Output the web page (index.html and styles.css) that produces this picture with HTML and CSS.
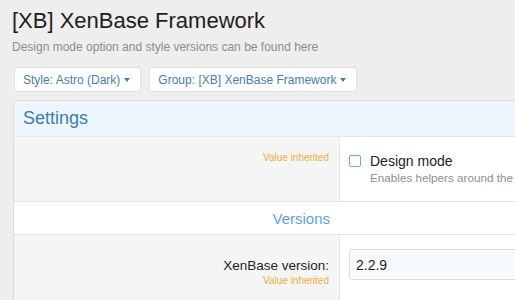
FILE: index.html
```html
<!DOCTYPE html>
<html>
<head>
    <meta charset="utf-8">
    <link rel="stylesheet" href="styles.css">
</head>
<body>
    <div class="page">
        <div class="page-header">
            <h1 class="page-title">[XB] XenBase Framework</h1>
            <div class="page-desc">Design mode option and style versions can be found here</div>
        </div>

        <div class="filter-bar">
            <button class="menu-btn">Style: Astro (Dark) <span class="caret"></span></button>
            <button class="menu-btn">Group: [XB] XenBase Framework <span class="caret"></span></button>
        </div>

        <div class="block">
            <div class="block-header">Settings</div>

            <div class="form-row row-design">
                <div class="row-label">
                    <div class="hint">Value inherited</div>
                </div>
                <div class="row-input">
                    <label class="check">
                        <span class="check-box"></span>
                        <span class="check-text">
                            <span class="check-title">Design mode</span>
                            <span class="check-desc">Enables helpers around the</span>
                        </span>
                    </label>
                </div>
            </div>

            <div class="section-row">
                <div class="section-title">Versions</div>
            </div>

            <div class="form-row row-version">
                <div class="row-label">
                    <div class="label-text">XenBase version:</div>
                    <div class="hint">Value inherited</div>
                </div>
                <div class="row-input">
                    <input class="text-input" type="text" value="2.2.9">
                </div>
            </div>
        </div>
    </div>
</body>
</html>
```

FILE: styles.css
```css
* {
    margin: 0;
    padding: 0;
    box-sizing: border-box;
}

body {
    background: #eeeeee;
    font-family: "Liberation Sans", Arial, sans-serif;
    color: #141414;
    overflow: hidden;
}

.page {
    width: 640px;
    padding-left: 13px;
}

.page-header {
    padding-top: 7px;
}

.page-title {
    font-size: 22px;
    font-weight: 400;
    line-height: 28px;
    margin-left: -1px;
    color: #1d1d1d;
}

.page-desc {
    margin-top: 5px;
    font-size: 12px;
    line-height: 14px;
    margin-left: -1px;
    color: #8c8c8c;
}

.filter-bar {
    display: flex;
    gap: 8px;
    margin-top: 13px;
    padding-left: 1px;
}

.menu-btn {
    height: 25px;
    padding: 0 10px 0 8px;
    background: #fff;
    border: 1px solid #e2e2e2;
    border-radius: 3px;
    font-family: inherit;
    font-size: 12px;
    color: #4c7ea8;
    display: flex;
    align-items: center;
    gap: 4px;
}

.caret {
    width: 0;
    height: 0;
    border-left: 3.5px solid transparent;
    border-right: 3.5px solid transparent;
    border-top: 4px solid #4c7ea8;
}

.block {
    margin-top: 8px;
    background: #fff;
    border: 1px solid #dedede;
    border-right: none;
    border-radius: 3px 0 0 0;
}

.block-header {
    height: 36px;
    padding-left: 9px;
    display: flex;
    align-items: center;
    background: #edf6fd;
    border-bottom: 1px solid #dde8f0;
    font-size: 18px;
    color: #3c7eae;
}

.form-row {
    display: grid;
    grid-template-columns: 326px 1fr;
}

.row-label {
    background: #f5f5f5;
    border-right: 1px solid #e6e6e6;
    padding-right: 10px;
    text-align: right;
}

.row-input {
    padding-left: 9px;
}

.hint {
    font-size: 10px;
    line-height: 12px;
    color: #f2ad3b;
}

.row-design {
    height: 64px;
}

.row-design .row-label {
    padding-top: 15px;
}

.row-design .row-input {
    padding-top: 16px;
}

.check {
    display: flex;
    gap: 9px;
}

.check-box {
    flex: none;
    width: 12px;
    height: 12px;
    margin-top: 2px;
    border: 1px solid #6aa8d6;
    border-radius: 2px;
    background: #fff;
}

.check-text {
    display: flex;
    flex-direction: column;
    white-space: nowrap;
}

.check-title {
    font-size: 14px;
    line-height: 16px;
    color: #1d1d1d;
}

.check-desc {
    margin-top: 2px;
    font-size: 11.7px;
    line-height: 14px;
    color: #8f8f8f;
}

.section-row {
    height: 34px;
    border-top: 1px solid #e4e4e4;
    border-bottom: 1px solid #e4e4e4;
    display: grid;
    grid-template-columns: 326px 1fr;
    align-items: center;
}

.section-title {
    padding-right: 10px;
    text-align: right;
    font-size: 15px;
    color: #5aa5da;
}

.row-version {
    height: 70px;
}

.row-version .row-label {
    padding-top: 23px;
}

.label-text {
    font-size: 13.5px;
    line-height: 16px;
    color: #1d1d1d;
}

.row-version .hint {
    margin-top: 1px;
}

.row-version .row-input {
    padding-top: 14px;
}

.text-input {
    width: 240px;
    height: 31px;
    padding: 0 6px;
    border: 1px solid #dcdcdc;
    border-radius: 3px;
    background: #f8fbfd;
    font-family: inherit;
    font-size: 14px;
    color: #1d1d1d;
}
```
